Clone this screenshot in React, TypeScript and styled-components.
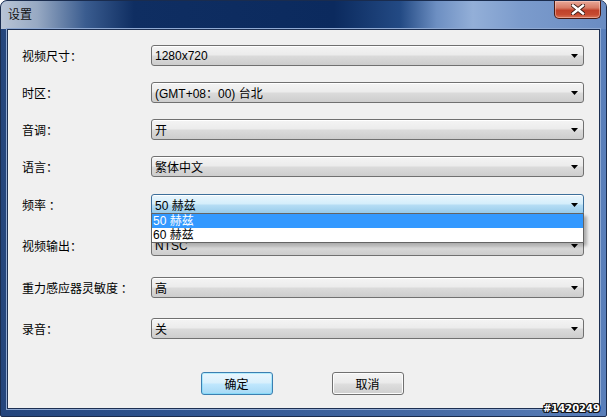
import React from "react";
import styled, { createGlobalStyle, css } from "styled-components";

const GlobalStyle = createGlobalStyle`
  html, body { margin: 0; padding: 0; background: #ffffff; }
  body { font-family: "Liberation Sans", "Noto Sans CJK SC", sans-serif; font-size: 12px; }
`;

const Window = styled.div`
  position: relative;
  width: 607px;
  height: 417px;
  box-sizing: border-box;
  border: 1px solid #1a2c4e;
  border-radius: 7px 7px 2px 2px;
  overflow: hidden;
  display: flex;
  flex-direction: column;
  background: linear-gradient(90deg, #24457c 0%, #2f5490 30%, #4569a3 70%, #5a7fba 100%);
`;

const TitleBar = styled.div`
  height: 28px;
  flex: none;
  display: flex;
  align-items: flex-start;
  justify-content: space-between;
  background: linear-gradient(
    90deg,
    #b9c5d6 0%,
    #97a9c3 6%,
    #3a5c8f 14%,
    #0f2e62 22%,
    #0b2a5e 55%,
    #234a84 66%,
    #6d8fc2 72%,
    #93afd8 78%,
    #7b9bcc 86%,
    #6a8cc2 100%
  );
`;

const Title = styled.span`
  margin: 7px 0 0 7px;
  font-size: 12px;
  color: #111;
  line-height: 14px;
`;

const CloseButton = styled.div`
  width: 47px;
  height: 18px;
  margin-right: 5px;
  box-sizing: border-box;
  border: 1px solid #4a1a12;
  border-top: none;
  border-radius: 0 0 5px 5px;
  background: linear-gradient(180deg, #e9a898 0%, #d77b66 40%, #c0412a 55%, #c64b31 80%, #d8765a 100%);
  box-shadow: inset 0 0 0 1px rgba(255, 220, 210, 0.45);
  display: flex;
  align-items: center;
  justify-content: center;
`;

const Content = styled.div`
  flex: 1;
  margin: 0 6px 7px 6px;
  box-sizing: border-box;
  border: 1px solid #1c2f52;
  box-shadow: 0 0 0 1px #8fa9d2;
  background: #f0f0f0;
  padding: 15px 15px 0 14px;
  display: flex;
  flex-direction: column;
`;

const Row = styled.div<{ $gap: number }>`
  display: flex;
  align-items: center;
  height: 21px;
  margin-top: ${(p) => p.$gap}px;
`;

const Label = styled.div`
  width: 129px;
  flex: none;
  font-family: "Noto Sans CJK SC", sans-serif;
  font-size: 12px;
  color: #000;
  line-height: 21px;
`;

const Combo = styled.div<{ $active?: boolean }>`
  position: relative;
  flex: 1;
  height: 21px;
  box-sizing: border-box;
  border: 1px solid #707070;
  border-radius: 3px;
  display: flex;
  align-items: center;
  justify-content: space-between;
  padding: 0 5px 0 3px;
  background: linear-gradient(180deg, #f4f4f4 0%, #ececec 45%, #dadada 55%, #cdcdcd 100%);
  box-shadow: inset 0 1px 0 #ffffff;
  ${(p) =>
    p.$active &&
    css`
      border-color: #3c6f9b;
      background: linear-gradient(180deg, #eaf6fd 0%, #d5eefb 45%, #b4dcf4 55%, #94c9ea 100%);
    `}
`;

const Value = styled.span`
  font-family: "Liberation Sans", "Noto Sans CJK SC", sans-serif;
  font-size: 12px;
  color: #000;
  white-space: nowrap;
`;

const Arrow = styled.svg`
  width: 7px;
  height: 4px;
  flex: none;
`;

const DropList = styled.div`
  position: absolute;
  top: calc(100% - 1px);
  left: -1px;
  right: -1px;
  z-index: 2;
  box-sizing: border-box;
  border: 1px solid #646464;
  background: #ffffff;
  box-shadow: 3px 3px 3px rgba(0, 0, 0, 0.28);
  display: flex;
  flex-direction: column;
`;

const Option = styled.div<{ $selected?: boolean }>`
  height: 14px;
  line-height: 14px;
  padding-left: 1px;
  font-family: "Liberation Sans", "Noto Sans CJK SC", sans-serif;
  font-size: 12px;
  color: ${(p) => (p.$selected ? "#ffffff" : "#000000")};
  background: ${(p) => (p.$selected ? "#3399ff" : "#ffffff")};
`;

const ButtonRow = styled.div`
  display: flex;
  justify-content: center;
  gap: 59px;
  margin-top: 33px;
  padding-right: 2px;
`;

const Button = styled.div<{ $default?: boolean }>`
  width: 72px;
  height: 23px;
  box-sizing: border-box;
  border-radius: 3px;
  display: flex;
  align-items: center;
  justify-content: center;
  font-family: "Noto Sans CJK SC", sans-serif;
  font-size: 12px;
  color: #000;
  border: 1px solid #707070;
  background: linear-gradient(180deg, #f4f4f4 0%, #ebebeb 45%, #dddddd 55%, #cfcfcf 100%);
  box-shadow: inset 0 0 0 1px #fcfcfc;
  ${(p) =>
    p.$default &&
    css`
      border-color: #3c7fb1;
      background: linear-gradient(180deg, #eaf6fd 0%, #d9f0fc 45%, #bee6fd 55%, #a7d9f5 100%);
      box-shadow: inset 0 0 0 1px #48d8fb55;
    `}
`;

const Watermark = styled.span`
  position: absolute;
  right: 6px;
  bottom: 1px;
  font-family: "DejaVu Sans", sans-serif;
  font-weight: bold;
  font-size: 10px;
  line-height: 12px;
  color: #ffffff;
  text-shadow: 1px 0 0 #111, -1px 0 0 #111, 0 1px 0 #111, 0 -1px 0 #111, 1px 1px 0 #111, -1px -1px 0 #111,
    1px -1px 0 #111, -1px 1px 0 #111;
`;

const ArrowIcon = () => (
  <Arrow viewBox="0 0 7 4">
    <path d="M0 0 H7 L3.5 4 Z" fill="#000" />
  </Arrow>
);

type Field = { label: string; value: string; gap: number; active?: boolean };

const fields: Field[] = [
  { label: "视频尺寸：", value: "1280x720", gap: 0 },
  { label: "时区：", value: "(GMT+08：00) 台北", gap: 16 },
  { label: "音调：", value: "开", gap: 16 },
  { label: "语言：", value: "繁体中文", gap: 16 },
  { label: "频率 ：", value: "50 赫兹", gap: 17, active: true },
  { label: "视频输出：", value: "NTSC", gap: 20 },
  { label: "重力感应器灵敏度 ：", value: "高", gap: 21 },
  { label: "录音：", value: "关", gap: 20 },
];

export default function App() {
  return (
    <>
      <GlobalStyle />
      <Window>
        <TitleBar>
          <Title>设置</Title>
          <CloseButton>
            <svg width="14" height="11" viewBox="0 0 14 11">
              <path
                d="M2 1.5 L12 9.5 M12 1.5 L2 9.5"
                stroke="#3a1a14"
                strokeWidth="4.2"
                strokeLinecap="square"
              />
              <path d="M2 1.5 L12 9.5 M12 1.5 L2 9.5" stroke="#ffffff" strokeWidth="2.4" strokeLinecap="square" />
            </svg>
          </CloseButton>
        </TitleBar>
        <Content>
          {fields.map((f) => (
            <Row key={f.label} $gap={f.gap}>
              <Label>{f.label}</Label>
              <Combo $active={f.active}>
                <Value>{f.value}</Value>
                <ArrowIcon />
                {f.active && (
                  <DropList>
                    <Option $selected>50 赫兹</Option>
                    <Option>60 赫兹</Option>
                  </DropList>
                )}
              </Combo>
            </Row>
          ))}
          <ButtonRow>
            <Button $default>确定</Button>
            <Button>取消</Button>
          </ButtonRow>
        </Content>
        <Watermark>#1420249</Watermark>
      </Window>
    </>
  );
}
